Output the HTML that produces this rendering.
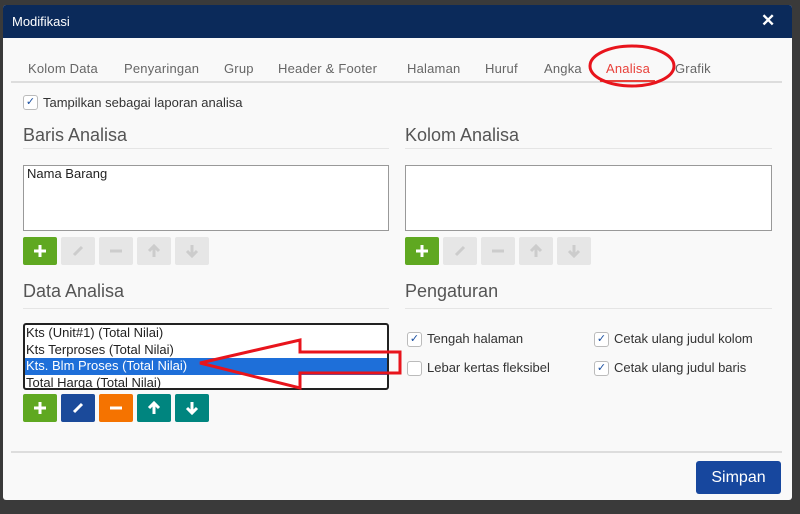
<!DOCTYPE html><html><head><style>
*{box-sizing:border-box;margin:0;padding:0}
body{width:800px;height:514px;background:#3a3a3a;position:relative;overflow:hidden;font-family:"Liberation Sans",sans-serif}
.a{position:absolute}
.modal{left:3px;top:5px;width:789px;height:495px;background:#f9f9f9;border-radius:3px;overflow:hidden}
.hdr{left:0;top:0;width:789px;height:33px;background:#0b2a5a;color:#fff;font-size:13px}
.tab{top:56px;font-size:13px;color:#666;letter-spacing:.2px}
h2{position:absolute;font-weight:normal;font-size:18px;color:#555}
.line{height:1px;background:#e5e5e5}
.box{background:#fff;border:1px solid #999;font-size:13px;color:#222}
.btn{width:34px;height:28px;border-radius:2px;display:flex;align-items:center;justify-content:center}
.dis{background:#e6e6e6}
.cb{width:15px;height:15px;border:1px solid #bbb;border-radius:3px;background:#fff;font-size:11px;color:#1a4fa0;text-align:center;line-height:13px}
.lbl{font-size:13px;color:#333}
</style></head><body>
<div class="a modal">
<div class="a hdr"><span class="a" style="left:9px;top:9px">Modifikasi</span><span class="a" style="left:758px;top:6px;font-size:17px;font-weight:bold">✕</span></div>
<div class="a" style="left:8px;top:76px;width:771px;height:2px;background:#ddd"></div>
<span class="a tab" style="left:25px">Kolom Data</span>
<span class="a tab" style="left:121px">Penyaringan</span>
<span class="a tab" style="left:221px">Grup</span>
<span class="a tab" style="left:275px">Header &amp; Footer</span>
<span class="a tab" style="left:404px">Halaman</span>
<span class="a tab" style="left:482px">Huruf</span>
<span class="a tab" style="left:541px">Angka</span>
<span class="a tab" style="left:603px;color:#e8413a">Analisa</span>
<div class="a" style="left:597px;top:75px;width:55px;height:2px;background:#e8413a"></div>
<span class="a tab" style="left:672px">Grafik</span>
<div class="a cb" style="left:20px;top:90px">✓</div><span class="a lbl" style="left:40px;top:90px">Tampilkan sebagai laporan analisa</span>
<h2 style="left:20px;top:120px">Baris Analisa</h2><div class="a line" style="left:20px;top:143px;width:366px"></div>
<h2 style="left:402px;top:120px">Kolom Analisa</h2><div class="a line" style="left:402px;top:143px;width:367px"></div>
<div class="a box" style="left:20px;top:160px;width:366px;height:66px;padding:0 3px">Nama Barang</div>
<div class="a box" style="left:402px;top:160px;width:367px;height:66px"></div>
<h2 style="left:20px;top:276px">Data Analisa</h2><div class="a line" style="left:20px;top:303px;width:366px"></div>
<h2 style="left:402px;top:276px">Pengaturan</h2><div class="a line" style="left:402px;top:303px;width:367px"></div>
<div class="a box" style="left:20px;top:318px;width:366px;height:67px;border:2px solid #222;border-radius:3px;line-height:16.5px;overflow:hidden">
<div style="padding-left:1px">Kts (Unit#1) (Total Nilai)</div>
<div style="padding-left:1px">Kts Terproses (Total Nilai)</div>
<div style="padding-left:1px;background:#1e6fd9;color:#fff">Kts. Blm Proses (Total Nilai)</div>
<div style="padding-left:1px">Total Harga (Total Nilai)</div></div>
<div class="a cb" style="left:404px;top:327px">✓</div><span class="a lbl" style="left:424px;top:326px">Tengah halaman</span>
<div class="a cb" style="left:404px;top:356px"></div><span class="a lbl" style="left:424px;top:355px">Lebar kertas fleksibel</span>
<div class="a cb" style="left:591px;top:327px">✓</div><span class="a lbl" style="left:611px;top:326px">Cetak ulang judul kolom</span>
<div class="a cb" style="left:591px;top:356px">✓</div><span class="a lbl" style="left:611px;top:355px">Cetak ulang judul baris</span>
<div class="a line" style="left:8px;top:446px;width:771px;height:2px;background:#ddd"></div>
<div class="a" style="left:693px;top:456px;width:85px;height:33px;background:#17479e;border-radius:3px;color:#fff;font-size:16px;text-align:center;line-height:33px">Simpan</div>
</div>
<div class="a btn" style="left:23px;top:237px;background:#5fa821"><svg width="14" height="14"><path d="M7 1v12M1 7h12" stroke="#fff" stroke-width="3"/></svg></div>
<div class="a btn dis" style="left:61px;top:237px"><svg width="14" height="14"><path d="M3 11l8-8" stroke="#ccc" stroke-width="3"/></svg></div>
<div class="a btn dis" style="left:99px;top:237px"><svg width="14" height="14"><path d="M1 7h12" stroke="#ccc" stroke-width="3"/></svg></div>
<div class="a btn dis" style="left:137px;top:237px"><svg width="14" height="14"><path d="M7 13V3M2 7l5-5 5 5" stroke="#ccc" stroke-width="3" fill="none"/></svg></div>
<div class="a btn dis" style="left:175px;top:237px"><svg width="14" height="14"><path d="M7 1v10M2 7l5 5 5-5" stroke="#ccc" stroke-width="3" fill="none"/></svg></div>
<div class="a btn" style="left:405px;top:237px;background:#5fa821"><svg width="14" height="14"><path d="M7 1v12M1 7h12" stroke="#fff" stroke-width="3"/></svg></div>
<div class="a btn dis" style="left:443px;top:237px"><svg width="14" height="14"><path d="M3 11l8-8" stroke="#ccc" stroke-width="3"/></svg></div>
<div class="a btn dis" style="left:481px;top:237px"><svg width="14" height="14"><path d="M1 7h12" stroke="#ccc" stroke-width="3"/></svg></div>
<div class="a btn dis" style="left:519px;top:237px"><svg width="14" height="14"><path d="M7 13V3M2 7l5-5 5 5" stroke="#ccc" stroke-width="3" fill="none"/></svg></div>
<div class="a btn dis" style="left:557px;top:237px"><svg width="14" height="14"><path d="M7 1v10M2 7l5 5 5-5" stroke="#ccc" stroke-width="3" fill="none"/></svg></div>
<div class="a btn" style="left:23px;top:394px;background:#5fa821"><svg width="14" height="14"><path d="M7 1v12M1 7h12" stroke="#fff" stroke-width="3"/></svg></div>
<div class="a btn" style="left:61px;top:394px;background:#1b4a9a"><svg width="14" height="14"><path d="M3 11l8-8" stroke="#fff" stroke-width="3"/></svg></div>
<div class="a btn" style="left:99px;top:394px;background:#f57300"><svg width="14" height="14"><path d="M1 7h12" stroke="#fff" stroke-width="3"/></svg></div>
<div class="a btn" style="left:137px;top:394px;background:#00857f"><svg width="14" height="14"><path d="M7 13V3M2 7l5-5 5 5" stroke="#fff" stroke-width="3" fill="none"/></svg></div>
<div class="a btn" style="left:175px;top:394px;background:#00857f"><svg width="14" height="14"><path d="M7 1v10M2 7l5 5 5-5" stroke="#fff" stroke-width="3" fill="none"/></svg></div>
<svg class="a" style="left:0;top:0" width="800" height="514">
<ellipse cx="632" cy="66" rx="42" ry="20" fill="none" stroke="#e8141c" stroke-width="3"/>
<polygon points="200,363 300,340 300,352 400,352 400,373 300,373 300,388" fill="none" stroke="#e8141c" stroke-width="3"/>
</svg>
</body></html>
